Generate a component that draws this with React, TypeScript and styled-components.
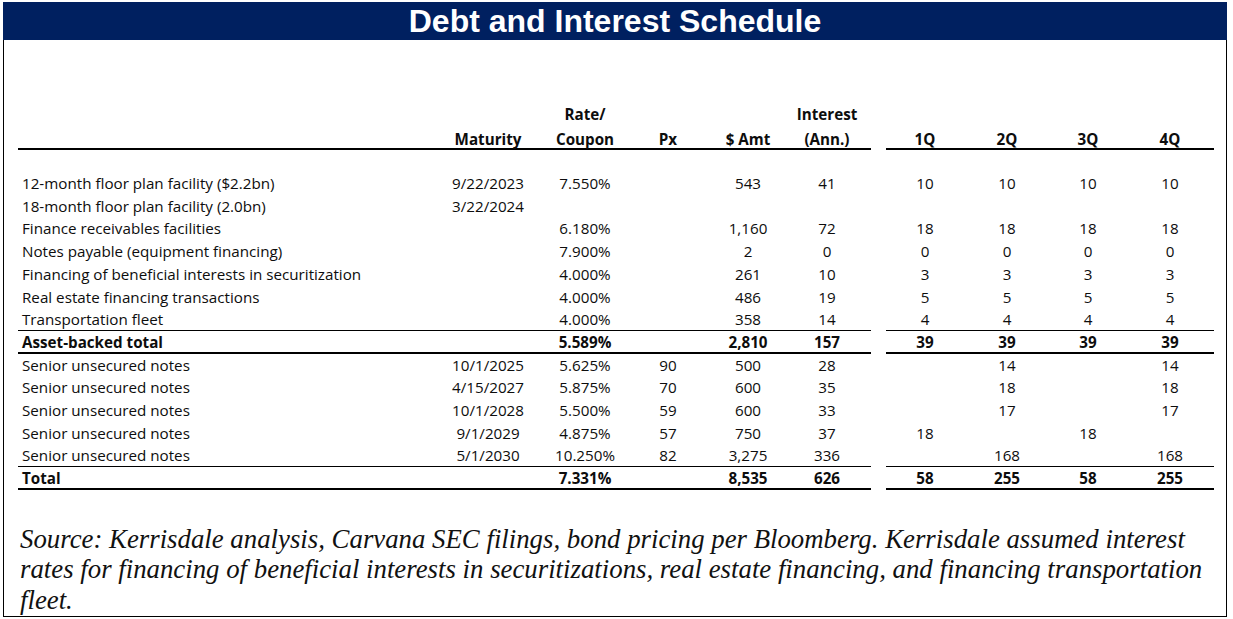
import React from "react";
import styled, { createGlobalStyle, css } from "styled-components";

const GlobalStyle = createGlobalStyle`
  html, body {
    margin: 0;
    padding: 0;
    background: #ffffff;
  }
  body {
    font-family: "Open Sans", "Liberation Sans", sans-serif;
    color: #111111;
  }
`;

const COLS = "411px 118px 76px 90px 70px 88px 15px 78px 86px 76px 88px";

type Rule = "none" | "thin" | "thick";

const Frame = styled.div`
  width: 1224px;
  margin: 2px 0 0 3px;
`;

const TitleBar = styled.div`
  height: 38px;
  box-sizing: border-box;
  padding-top: 1px;
  background: #002060;
  color: #ffffff;
  font-family: "Liberation Sans", Arial, sans-serif;
  font-weight: 700;
  font-size: 32px;
  line-height: 37px;
  text-align: center;
`;

const Sheet = styled.div`
  border: 1px solid #000000;
  border-top: none;
  padding: 61px 13px 1px 14px;
`;

const Table = styled.div`
  width: 1196px;
  font-family: "Open Sans", "Liberation Sans", sans-serif;
  font-size: 15.2px;
  color: #0d0d0d;
`;

const Cell = styled.div<{ $align?: "left" | "center"; $bold?: boolean }>`
  display: flex;
  align-items: flex-end;
  justify-content: ${(p) => (p.$align === "left" ? "flex-start" : "center")};
  padding: 0 0 2px ${(p) => (p.$align === "left" ? "4px" : "0")};
  box-sizing: border-box;
  font-weight: ${(p) => (p.$bold ? 700 : 400)};
  line-height: 20px;
  white-space: nowrap;
`;

const Gap = styled.div``;

const ruleCss = {
  none: css``,
  thin: css`
    box-shadow: inset 0 -1px 0 #000000;
  `,
  thick: css`
    box-shadow: inset 0 -2px 0 #000000;
  `,
};

const Row = styled.div<{ $rule: Rule }>`
  display: grid;
  grid-template-columns: ${COLS};
  height: 22.7px;

  & > ${Cell} {
    ${(p) => ruleCss[p.$rule]}
  }
`;

const HeadRow = styled.div`
  display: grid;
  grid-template-columns: ${COLS};
  height: 48px;
  font-weight: 700;
`;

const HeadCell = styled.div`
  display: flex;
  flex-direction: column;
  justify-content: flex-end;
  align-items: center;
  box-sizing: border-box;
  padding-bottom: 1px;
  box-shadow: inset 0 -2px 0 #000000;
  white-space: nowrap;
`;

const HeadLine = styled.span`
  line-height: 27.5px;
  &:last-child {
    line-height: 20px;
  }
`;

const Spacer = styled.div`
  height: 23.4px;
`;

const Source = styled.p`
  margin: 33.5px 0 0 2px;
  font-family: "Liberation Serif", "Times New Roman", serif;
  font-style: italic;
  font-size: 26.8px;
  line-height: 30.5px;
  color: #111111;
  white-space: nowrap;
`;

type DataRow = {
  label: string;
  maturity?: string;
  rate?: string;
  px?: string;
  amt?: string;
  interest?: string;
  q: [string, string, string, string];
  bold?: boolean;
  rule?: Rule;
};

const rows: DataRow[] = [
  { label: "12-month floor plan facility ($2.2bn)", maturity: "9/22/2023", rate: "7.550%", amt: "543", interest: "41", q: ["10", "10", "10", "10"] },
  { label: "18-month floor plan facility (2.0bn)", maturity: "3/22/2024", q: ["", "", "", ""] },
  { label: "Finance receivables facilities", rate: "6.180%", amt: "1,160", interest: "72", q: ["18", "18", "18", "18"] },
  { label: "Notes payable (equipment financing)", rate: "7.900%", amt: "2", interest: "0", q: ["0", "0", "0", "0"] },
  { label: "Financing of beneficial interests in securitization", rate: "4.000%", amt: "261", interest: "10", q: ["3", "3", "3", "3"] },
  { label: "Real estate financing transactions", rate: "4.000%", amt: "486", interest: "19", q: ["5", "5", "5", "5"] },
  { label: "Transportation fleet", rate: "4.000%", amt: "358", interest: "14", q: ["4", "4", "4", "4"], rule: "thin" },
  { label: "Asset-backed total", rate: "5.589%", amt: "2,810", interest: "157", q: ["39", "39", "39", "39"], bold: true, rule: "thick" },
  { label: "Senior unsecured notes", maturity: "10/1/2025", rate: "5.625%", px: "90", amt: "500", interest: "28", q: ["", "14", "", "14"] },
  { label: "Senior unsecured notes", maturity: "4/15/2027", rate: "5.875%", px: "70", amt: "600", interest: "35", q: ["", "18", "", "18"] },
  { label: "Senior unsecured notes", maturity: "10/1/2028", rate: "5.500%", px: "59", amt: "600", interest: "33", q: ["", "17", "", "17"] },
  { label: "Senior unsecured notes", maturity: "9/1/2029", rate: "4.875%", px: "57", amt: "750", interest: "37", q: ["18", "", "18", ""] },
  { label: "Senior unsecured notes", maturity: "5/1/2030", rate: "10.250%", px: "82", amt: "3,275", interest: "336", q: ["", "168", "", "168"], rule: "thin" },
  { label: "Total", rate: "7.331%", amt: "8,535", interest: "626", q: ["58", "255", "58", "255"], bold: true, rule: "thick" },
];

const headers: string[][] = [
  [],
  ["Maturity"],
  ["Rate/", "Coupon"],
  ["Px"],
  ["$ Amt"],
  ["Interest", "(Ann.)"],
];

const quarters = ["1Q", "2Q", "3Q", "4Q"];

export default function App() {
  return (
    <>
      <GlobalStyle />
      <Frame>
        <TitleBar>Debt and Interest Schedule</TitleBar>
        <Sheet>
          <Table>
            <HeadRow>
              {headers.map((lines, i) => (
                <HeadCell key={i}>
                  {lines.map((l) => (
                    <HeadLine key={l}>{l}</HeadLine>
                  ))}
                </HeadCell>
              ))}
              <Gap />
              {quarters.map((q) => (
                <HeadCell key={q}>
                  <HeadLine>{q}</HeadLine>
                </HeadCell>
              ))}
            </HeadRow>
            <Spacer />
            {rows.map((r, i) => (
              <Row key={i} $rule={r.rule ?? "none"}>
                <Cell $align="left" $bold={r.bold}>{r.label}</Cell>
                <Cell $bold={r.bold}>{r.maturity}</Cell>
                <Cell $bold={r.bold}>{r.rate}</Cell>
                <Cell $bold={r.bold}>{r.px}</Cell>
                <Cell $bold={r.bold}>{r.amt}</Cell>
                <Cell $bold={r.bold}>{r.interest}</Cell>
                <Gap />
                {r.q.map((v, j) => (
                  <Cell key={j} $bold={r.bold}>{v}</Cell>
                ))}
              </Row>
            ))}
          </Table>
          <Source>
            Source: Kerrisdale analysis, Carvana SEC filings, bond pricing per Bloomberg. Kerrisdale assumed interest
            <br />
            rates for financing of beneficial interests in securitizations, real estate financing, and financing transportation
            <br />
            fleet.
          </Source>
        </Sheet>
      </Frame>
    </>
  );
}
